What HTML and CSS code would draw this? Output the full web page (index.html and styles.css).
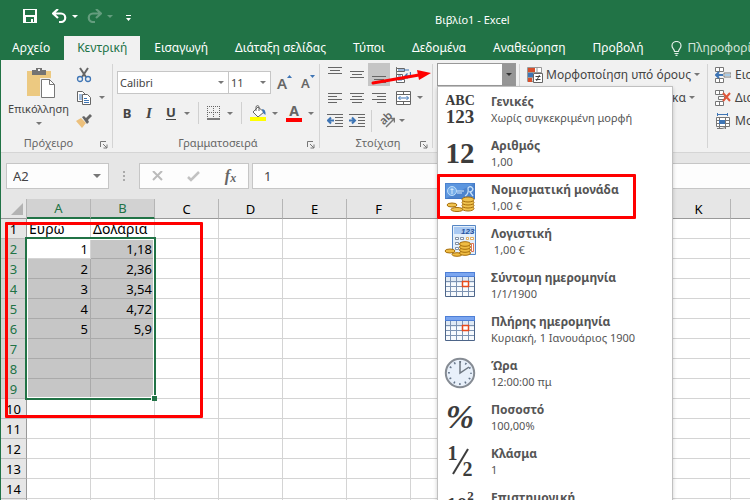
FILE: index.html
```html
<!DOCTYPE html>
<html lang="el">
<head>
<meta charset="utf-8">
<title>Βιβλίο1 - Excel</title>
<link rel="stylesheet" href="styles.css">
</head>
<body>
<div class="app">
  <header class="titlebar">
    <div class="quick">
      <button class="plain" aria-label="Αποθήκευση"><svg width="14" height="14" viewBox="0 0 14 14"><path d="M0 0h14v14H0z" fill="#fff"/><path d="M2 1h10v5H2zM3 8h8v5h-1v-3H8v3H3z" fill="#217346"/><path d="M4 10h2v3H4z" fill="#217346"/></svg></button>
      <button class="plain undo" aria-label="Αναίρεση"><svg width="15" height="14" viewBox="0 0 15 14"><path d="M6 0 1 4.500 6 9M1.500 4.500H9a4 4 0 0 1 0 8.500H7" fill="none" stroke="#fff" stroke-width="2.200"/></svg><i class="caret"></i></button>
      <button class="plain redo" aria-label="Επανάληψη"><svg width="15" height="14" viewBox="0 0 15 14"><path d="m9 0 5 4.500L9 9M13.500 4.500H6A4 4 0 0 0 6 13h2" fill="none" stroke="#fff" stroke-width="2.200"/></svg><i class="caret"></i></button>
      <button class="plain more" aria-label="Προσαρμογή"><svg width="5" height="7" viewBox="0 0 5 7"><path d="M0 0h5v1H0zM0 3h5L2.500 6z" fill="#fff"/></svg></button>
    </div>
    <span class="title">Βιβλίο1 - Excel</span>
  </header>

  <nav class="tabs">
    <a href="#" class="file">Αρχείο</a>
    <a href="#" class="active">Κεντρική</a>
    <a href="#">Εισαγωγή</a>
    <a href="#">Διάταξη σελίδας</a>
    <a href="#">Τύποι</a>
    <a href="#">Δεδομένα</a>
    <a href="#">Αναθεώρηση</a>
    <a href="#">Προβολή</a>
    <a href="#" class="tell"><svg width="11" height="15" viewBox="0 0 11 15"><path d="M3.500 10.500C3.500 8 1 7.500 1 4.800a4.500 4.300 0 0 1 9 0C10 7.500 7.500 8 7.500 10.500zM3.500 12.500h4M4.500 14.300h2" fill="none" stroke="#e4efe8" stroke-width="1.200"/></svg>Πληροφορίες</a>
  </nav>

  <section class="ribbon">
    <div class="group clipboard">
      <div class="body">
        <button class="plain paste">
          <svg width="28" height="30" viewBox="0 0 28 30"><path d="M0 3h24v25H0z" fill="#ecc981"/><path d="M5 2h4V0h6v2h4v5H5z" fill="#737373"/><path d="M11 1h2v2h-2z" fill="#f1f1f1"/><path d="M14 11h9l5 5v13H14z" fill="#fff" stroke="#f1f1f1" stroke-width="2"/><path d="M14.500 11.500h8l5 5v13h-13zM22.500 11.500v5h5" fill="#fff" stroke="#777"/></svg>
          <span>Επικόλληση</span>
          <i class="caret"></i>
        </button>
        <div class="stack">
          <button class="plain" aria-label="Αποκοπή"><svg width="16" height="16" viewBox="0 0 16 16"><path d="m4 1 6 9M12 1l-6 9" stroke="#666" stroke-width="2"/><circle cx="4" cy="12" r="2.500" fill="none" stroke="#3e75b5" stroke-width="1.300"/><circle cx="12" cy="12" r="2.500" fill="none" stroke="#3e75b5" stroke-width="1.300"/></svg></button>
          <button class="plain" aria-label="Αντιγραφή"><svg width="16" height="16" viewBox="0 0 16 16"><path d="M1.500 1.500h5l3 3v7h-8z" fill="#fff" stroke="#666"/><path d="M3 5h3M3 7h3M3 9h3" stroke="#3e75b5"/><path d="M6.500 4.500h5l3 3v7h-8z" fill="#fff" stroke="#666"/><path d="M8 8.500h3M8 10.500h5M8 12.500h5" stroke="#3e75b5"/></svg><i class="caret"></i></button>
          <button class="plain" aria-label="Πινέλο μορφοποίησης"><svg width="16" height="16" viewBox="0 0 16 16"><path d="M0 8 5 5l5 5-4 5z" fill="#ecc07c"/><path d="m6 4 2-1 2 2 4-4 2 2-4 4 1 2-2 2z" fill="#666"/></svg></button>
        </div>
      </div>
      <div class="caption">Πρόχειρο<svg class="launch" width="8" height="8" viewBox="0 0 8 8"><path d="M.5 6V.5H6M3 3l4 4M7 3.500V7H3.500" fill="none" stroke="#777"/></svg></div>
    </div>
    <span class="divider"></span>

    <div class="group font">
      <div class="body">
        <div class="row">
          <div class="combo name"><select aria-label="Γραμματοσειρά"><option>Calibri</option></select><i class="caret"></i></div>
          <div class="combo size"><select aria-label="Μέγεθος"><option>11</option></select><i class="caret"></i></div>
          <button class="plain grow" aria-label="Αύξηση">A<svg width="5" height="3" viewBox="0 0 5 3"><path d="M0 3 2.500 0 5 3z" fill="#3e75b5"/></svg></button>
          <button class="plain shrink" aria-label="Μείωση">A<svg width="5" height="3" viewBox="0 0 5 3"><path d="M0 0h5L2.500 3z" fill="#3e75b5"/></svg></button>
        </div>
        <div class="row tools">
          <button class="plain letter"><b>B</b></button>
          <button class="plain letter"><b class="ital">I</b></button>
          <button class="plain letter under"><b>U</b></button><i class="caret"></i>
          <span class="bar"></span>
          <button class="plain" aria-label="Περιγράμματα"><svg width="14" height="14" viewBox="0 0 14 14"><path d="M0 .5h13M0 6.500h13M.5 0v12M6.500 0v12M12.500 0v12" stroke="#666" stroke-dasharray="1 1"/><path d="M0 13h13" stroke="#555" stroke-width="1.500"/></svg></button><i class="caret"></i>
          <span class="bar"></span>
          <button class="plain" aria-label="Χρώμα γεμίσματος"><svg width="16" height="16" viewBox="0 0 16 16"><path d="m3 7 5-5 6 5-6 5z" fill="#fff" stroke="#666"/><path d="M6 6V1.500q2-2 3 0V6" fill="none" stroke="#666"/><path d="M12 4q4 0 3.500 6L13 8z" fill="#3e75b5"/><path d="M0 12h16v4H0z" fill="#ff0"/></svg></button><i class="caret"></i>
          <button class="plain color" aria-label="Χρώμα γραμματοσειράς">A</button><i class="caret"></i>
        </div>
      </div>
      <div class="caption">Γραμματοσειρά<svg class="launch" width="8" height="8" viewBox="0 0 8 8"><path d="M.5 6V.5H6M3 3l4 4M7 3.500V7H3.500" fill="none" stroke="#777"/></svg></div>
    </div>
    <span class="divider"></span>

    <div class="group align">
      <div class="body">
        <div class="row">
          <button class="plain" aria-label="Επάνω"><svg width="16" height="16" viewBox="0 0 16 16"><path d="M1 .5h14M3 3.500h10M1 6.500h14" stroke="#666"/></svg></button>
          <button class="plain" aria-label="Μέση"><svg width="16" height="16" viewBox="0 0 16 16"><path d="M1 4.500h14M3 7.500h10M1 10.500h14" stroke="#666"/></svg></button>
          <button class="plain on" aria-label="Κάτω"><svg width="16" height="16" viewBox="0 0 16 16"><path d="M1 9.500h14M3 12.500h10M1 15.500h14" stroke="#666"/></svg></button>
          <button class="plain wide" aria-label="Αναδίπλωση"><svg width="16" height="16" viewBox="0 0 16 16"><path d="M1.500 0v16" stroke="#777"/><path d="M1.500 1.500h8v3h-8zM1.500 7.500h6v3h-6zM1.500 12.500h8v3h-8z" fill="#fff" stroke="#666"/><path d="M3 3h11M3 9h3M3 13h4" stroke="#3e75b5"/><path d="M15.500 5v4h-5M12.500 6.500 10 9l2.500 2.500" fill="none" stroke="#3e75b5" stroke-width="1.300"/></svg></button>
        </div>
        <div class="row">
          <button class="plain" aria-label="Αριστερά"><svg width="16" height="16" viewBox="0 0 16 16"><path d="M1 3.500h14M1 6.500h9M1 9.500h14M1 12.500h9" stroke="#666"/></svg></button>
          <button class="plain" aria-label="Κέντρο"><svg width="16" height="16" viewBox="0 0 16 16"><path d="M1 3.500h14M3 6.500h10M1 9.500h14M3 12.500h10" stroke="#666"/></svg></button>
          <button class="plain" aria-label="Δεξιά"><svg width="16" height="16" viewBox="0 0 16 16"><path d="M1 3.500h14M6 6.500h9M1 9.500h14M6 12.500h9" stroke="#666"/></svg></button>
          <button class="plain wide" aria-label="Συγχώνευση"><svg width="16" height="16" viewBox="0 0 16 16"><path d="M1.500 1.500h14v13h-14zM1.500 4.500h14M1.500 11.500h14M8.500 1v3.500M8.500 11.500V15" fill="#fff" stroke="#666"/><path d="M3.500 8h10M5.500 6l-2 2 2 2M11.500 6l2 2-2 2" fill="none" stroke="#3e75b5"/></svg><i class="caret"></i></button>
        </div>
        <div class="row">
          <button class="plain" aria-label="Μείωση εσοχής"><svg width="16" height="16" viewBox="0 0 16 16"><path d="M0 1.500h16M8 4.500h8M8 7.500h8M8 10.500h8M0 13.500h16" stroke="#666"/><path d="M7 7.500H1M4 4.500l-3 3 3 3" fill="none" stroke="#3e75b5" stroke-width="2"/></svg></button>
          <button class="plain" aria-label="Αύξηση εσοχής"><svg width="16" height="16" viewBox="0 0 16 16"><path d="M0 1.500h16M9 4.500h7M9 7.500h7M9 10.500h7M0 13.500h16" stroke="#666"/><path d="M0 7.500h6M3 4.500l3 3-3 3" fill="none" stroke="#3e75b5" stroke-width="2"/></svg></button>
          <span class="bar"></span>
          <button class="plain orient" aria-label="Προσανατολισμός"><span class="ab">ab</span><svg width="16" height="16" viewBox="0 0 16 16"><path d="m7 14 8-8M11.500 5.500h4v4" fill="none" stroke="#777" stroke-width="1.500"/></svg></button><i class="caret"></i>
        </div>
      </div>
      <div class="caption">Στοίχιση<svg class="launch" width="8" height="8" viewBox="0 0 8 8"><path d="M.5 6V.5H6M3 3l4 4M7 3.500V7H3.500" fill="none" stroke="#777"/></svg></div>
    </div>
    <span class="divider"></span>

    <div class="group number">
      <div class="format"><select aria-label="Μορφή αριθμού"><option></option></select><span class="drop"><i class="caret"></i></span></div>
      <svg class="arrow" width="64" height="20" viewBox="0 0 64 20"><path d="M4 14 50 6" stroke="#f00" stroke-width="3" stroke-linecap="round"/><path d="M48 1 62 4 50 11z" fill="#f00"/></svg>
      <ul class="menu">
        <li><span class="pic general"><span>ABC</span><span class="digits">123</span></span><div><b>Γενικές</b><span>Χωρίς συγκεκριμένη μορφή</span></div></li>
        <li><span class="pic big">12</span><div><b>Αριθμός</b><span>1,00</span></div></li>
        <li class="marked"><span class="pic"><svg width="32" height="32" viewBox="0 0 32 32"><path d="M1 2h30v16H1z" fill="#4b83cf"/><path d="M2 3h28v14H2z" fill="#5c96df"/><path d="M1 18h30V2z" fill="#3768b4" opacity=".4"/><circle cx="8" cy="10" r="4.500" fill="#78afea" stroke="#bddcf8"/><path d="M8 7v6M6.500 8.500h3M13 10h7M13 12h5" stroke="#d4e8fb"/><path d="M21 15q4-2 3-8 3-3 5 1-1 3-3 3l3 4" fill="none" stroke="#c7e0f8" stroke-width="1.300"/><g fill="#f0c24e" stroke="#a66e0c"><ellipse cx="8" cy="24" rx="5" ry="2"/><ellipse cx="13" cy="28.500" rx="6" ry="2"/><ellipse cx="24" cy="27.500" rx="6" ry="2.500"/><ellipse cx="24" cy="24.500" rx="6" ry="2.500"/><ellipse cx="24" cy="21.500" rx="6" ry="2.500"/><ellipse cx="24" cy="18.500" rx="6" ry="2.500"/></g></svg></span><div><b>Νομισματική μονάδα</b><span>1,00 €</span></div></li>
        <li><span class="pic"><svg width="32" height="32" viewBox="0 0 32 32"><path d="M8.500.5h23v29h-23z" fill="#e4effa" stroke="#5686c4"/><path d="M10 2h20v7H10z" fill="#a9c9f2"/><text x="17" y="9" class="calc">123</text><g fill="#fff" stroke="#64758d" stroke-width=".8"><path d="M11.500 12.500h3v2h-3zM16.500 12.500h3v2h-3zM11.500 17.500h3v2h-3zM16.500 17.500h3v2h-3zM11.500 22.500h3v2h-3z"/><path d="M22.500 12.500h2v2h-2zM26.500 12.500h3v2h-3z" stroke="#df9c34"/><path d="M27.500 18.500h2v8h-2z" stroke="#dc522a"/></g><g fill="#efbc43" stroke="#a66e0c"><ellipse cx="6" cy="26" rx="5" ry="2"/><ellipse cx="13" cy="29.500" rx="5" ry="1.800"/><ellipse cx="21" cy="28" rx="5.500" ry="2.300"/><ellipse cx="21" cy="25" rx="5.500" ry="2.300"/><ellipse cx="21" cy="22" rx="5.500" ry="2.300"/><ellipse cx="21" cy="19" rx="5.500" ry="2.300"/></g></svg></span><div><b>Λογιστική</b><span>&nbsp;1,00 €</span></div></li>
        <li><span class="pic"><svg width="32" height="32" viewBox="0 0 32 32"><path d="M1.500 3.500h29v24h-29z" fill="#f7fafd" stroke="#4d6589"/><path d="M2 8h28v6H2z" fill="#dfe9f4"/><path d="M1 3h30v5H1z" fill="#4e7fd6"/><path d="M2 4h28v3H2z" fill="#7ba6f0"/><path d="M6.500 8v19M12.500 8v19M18.500 8v19M24.500 8v19M2 12.500h28M2 17.500h28M2 22.500h28" stroke="#7d93b2"/><path d="M18.500 12.500h6v5h-6z" fill="#fff" stroke="#e84a1c" stroke-width="1.500"/></svg></span><div><b>Σύντομη ημερομηνία</b><span>1/1/1900</span></div></li>
        <li><span class="pic"><svg width="32" height="32" viewBox="0 0 32 32"><path d="M1.500 3.500h29v24h-29z" fill="#f7fafd" stroke="#4d6589"/><path d="M2 8h28v6H2z" fill="#dfe9f4"/><path d="M1 3h30v5H1z" fill="#4e7fd6"/><path d="M2 4h28v3H2z" fill="#7ba6f0"/><path d="M6.500 8v19M12.500 8v19M18.500 8v19M24.500 8v19M2 12.500h28M2 17.500h28M2 22.500h28" stroke="#7d93b2"/><path d="M18.500 12.500h6v5h-6z" fill="#fff" stroke="#e84a1c" stroke-width="1.500"/></svg></span><div><b>Πλήρης ημερομηνία</b><span>Κυριακή, 1 Ιανουάριος 1900</span></div></li>
        <li><span class="pic"><svg width="32" height="32" viewBox="0 0 32 32"><circle cx="16" cy="16" r="14.200" fill="#e8f0fa" stroke="#868c94" stroke-width="2"/><circle cx="16" cy="16" r="11" fill="none" stroke="#65758a" stroke-width="2" stroke-dasharray="1.500 4.260" stroke-dashoffset=".75"/><path d="M16 4v12l9-6" fill="none" stroke="#6e7781" stroke-width="1.500"/></svg></span><div><b>Ώρα</b><span>12:00:00 πμ</span></div></li>
        <li><span class="pic slant">%</span><div><b>Ποσοστό</b><span>100,00%</span></div></li>
        <li><span class="pic frac"><span>1</span><svg width="32" height="32" viewBox="0 0 32 32"><path d="M9 29 24 4" stroke="#3c3c3c" stroke-width="2"/></svg><span class="lower">2</span></span><div><b>Κλάσμα</b><span>1</span></div></li>
        <li><span class="pic science">10<sup>2</sup></span><div><b>Επιστημονική</b><span>1,00E+00</span></div></li>
      </ul>
    </div>
    <span class="divider"></span>

    <div class="group styles">
      <button class="plain"><svg width="16" height="16" viewBox="0 0 16 16"><path d="M.5.500h14v14H.5zM.5 5.500h14M.5 10.500h14M5 .5v14M10 .5v14" fill="#fff" stroke="#999"/><path d="M1 1h7v4H1zM1 11h4v4H1z" fill="#d8502d"/><path d="M1 6h5v4H1z" fill="#3e75b5"/><path d="M6.500 6.500h9v9h-9z" fill="#fff" stroke="#666"/><path d="M8.500 9.500h5M8.500 12.500h5M12.500 8l-3 6" stroke="#444"/></svg>Μορφοποίηση υπό όρους<i class="caret"></i></button>
      <button class="plain">Μορφοποίηση ως πίνακα<i class="caret"></i></button>
    </div>
    <span class="divider"></span>

    <div class="group cells">
      <button class="plain"><svg width="16" height="16" viewBox="0 0 16 16"><path d="M.5.500h8v4h-8zM4.500.500v4M.5 11.500h8v4h-8zM4.500 11.500v4M9 6h7v4H9z" fill="#fff" stroke="#777"/><path d="M10 7h5v2h-5z" fill="#a9cbe6"/><path d="M8 8H1M4 5 1 8l3 3" fill="none" stroke="#3e75b5" stroke-width="2"/></svg>Εισαγωγή</button>
      <button class="plain"><svg width="16" height="16" viewBox="0 0 16 16"><path d="M.5.500h8v4h-8zM4.500.500v4M.5 11.500h8v4h-8zM4.500 11.500v4M3.500 6.500h6v3h-6z" fill="#fff" stroke="#777"/><path d="m8 3 7 8M15 3l-7 8" stroke="#e0563a" stroke-width="2"/></svg>Διαγραφή</button>
      <button class="plain"><svg width="16" height="16" viewBox="0 0 16 16"><path d="M2 1.500h11M2.500 0v3M12.500 0v3" stroke="#3e75b5"/><path d="M1.500 4.500h13v9h-13zM1.500 7.500h13M1.500 10.500h13M4.500 4v12M10.500 4v12M2 15.500h5l4-1" fill="#fff" stroke="#777"/><path d="M4 7h6v4H4z" fill="#3e75b5"/></svg>Μορφοποίηση</button>
    </div>
  </section>

  <section class="formula">
    <div class="box ref"><input aria-label="Πλαίσιο ονόματος" value="A2"><i class="caret"></i></div>
    <svg class="dots" width="2" height="11" viewBox="0 0 2 11"><path d="M0 0h2v2H0zM0 4h2v2H0zM0 8h2v2H0z" fill="#aaa"/></svg>
    <div class="box actions">
      <button class="plain" aria-label="Άκυρο"><svg width="12" height="10" viewBox="0 0 12 10"><path d="m1 0 9 9M10 0 1 9" stroke="#bbb" stroke-width="2"/></svg></button>
      <button class="plain" aria-label="Εισαγωγή τιμής"><svg width="14" height="11" viewBox="0 0 14 11"><path d="m1 6 3 3L12 1" fill="none" stroke="#c2c2c2" stroke-width="2.500"/></svg></button>
      <button class="plain fx">f<small>x</small></button>
    </div>
    <div class="box value"><input aria-label="Γραμμή τύπων" value="1"></div>
  </section>

  <main class="sheet">
    <table>
      <thead><tr id="heads"><th class="corner"><svg width="12" height="12" viewBox="0 0 12 12"><path d="M12 0v12H0z" fill="#b3b3b3"/></svg></th></tr></thead>
      <tbody id="rows"></tbody>
    </table>
    <div class="selection"></div>
    <div class="frame"></div>
  </main>
</div>
<script src="script.js"></script>
</body>
</html>
```
FILE: styles.css
```css
*, *::after { box-sizing: border-box; }
body {
  margin: 0;
  font: 12px/16px "Noto Sans", "Open Sans", sans-serif;
  color: #444;
}
.app {
  height: 100vh;
  display: flex;
  flex-direction: column;
  overflow: hidden;
  border-left: 1px solid #217346;
  background: #e6e6e6;
}
.plain {
  display: flex;
  align-items: center;
  padding: 0;
  border: 0;
  background: none;
  font: inherit;
  color: inherit;
}
svg { display: block; flex: none; }
.caret {
  flex: none;
  border: 3px solid transparent;
  border-top-color: #777;
  border-bottom: 0;
}

.titlebar {
  position: relative;
  height: 36px;
  flex: none;
  background: #217346;
  color: #fff;
}
.quick { display: flex; align-items: center; height: 32px; padding-left: 22px; }
.quick .caret { border-top-color: #fff; margin-left: 5px; }
.undo { margin-left: 15px; }
.redo { margin-left: 9px; opacity: .3; }
.more { margin-left: 13px; padding-top: 4px; }
.title { position: absolute; left: 434px; top: 12px; font-size: 11px; }

.tabs {
  display: flex;
  flex: none;
  height: 24px;
  background: #217346;
  line-height: 24px;
}
.tabs a {
  flex: none;
  padding: 0 13px;
  color: #fff;
  text-decoration: none;
  white-space: nowrap;
}
.tabs .active ~ a { margin-left: 1px; }
.tabs .file { padding: 0 14px 0 11px; }
.tabs .active { background: #f1f1f1; color: #217346; }
.tabs .tell { display: flex; align-items: center; gap: 6px; color: #d3e3da; }

.ribbon {
  display: flex;
  flex: none;
  height: 93px;
  padding-top: 3px;
  background: #f1f1f1;
  border-bottom: 1px solid #d5d5d5;
}
.divider { flex: none; width: 1px; margin: 1px 0 4px; background: #d4d4d4; }
.group { flex: none; display: flex; flex-direction: column; position: relative; }
.group .body { flex: 1; }
.caption {
  position: relative;
  height: 20px;
  padding-top: 3px;
  text-align: center;
  font-size: 11px;
  color: #666;
}
.launch { position: absolute; right: 4px; top: 9px; }
.row { display: flex; align-items: center; }
.bar { width: 1px; height: 22px; background: #d0d0d0; }

.clipboard { width: 111px; }
.clipboard .caption { padding-right: 16px; }
.clipboard .body { display: flex; }
.paste { flex-direction: column; width: 75px; padding-top: 5px; font-size: 11px; }
.paste svg { margin-left: 5px; }
.paste span { margin: 3px 0 5px; }
.stack { display: flex; flex-direction: column; }
.stack .plain { height: 23px; gap: 7px; }

.font { width: 206px; padding-left: 4px; }
.font .body { padding-top: 8px; }
.combo {
  display: flex;
  align-items: center;
  height: 23px;
  padding-right: 4px;
  background: #fff;
  border: 1px solid #c6c6c6;
  font-size: 11px;
}
.combo select, .format select, .box input {
  flex: 1;
  min-width: 0;
  padding: 0 2px;
  border: 0;
  outline: 0;
  appearance: none;
  background: none;
  font: inherit;
  color: inherit;
}
.name { width: 112px; }
.size { width: 43px; margin-left: -1px; }
.grow, .shrink { align-items: flex-start; font-size: 15px; font-weight: 600; color: #666; }
.grow { margin-left: 6px; }
.shrink { margin-left: 9px; font-size: 13px; }
.tools { height: 22px; margin-top: 8px; padding-left: 3px; gap: 8px; }
.letter { width: 14px; justify-content: center; font-size: 13px; }
.tools .caret { margin: 0 0 0 -2px; }
.ital { font-family: "Liberation Serif", serif; font-style: italic; font-size: 15px; }
.under b { border-bottom: 1px solid #444; line-height: 13px; }
.color {
  width: 16px;
  height: 17px;
  justify-content: center;
  border-bottom: 4px solid #f00;
  font-size: 14px;
  font-weight: 700;
  line-height: 12px;
  color: #666;
}

.align { width: 112px; padding-left: 4px; }
.align .row { height: 23px; }
.align .row .plain { width: 22px; height: 23px; justify-content: center; }
.align .row .wide { width: auto; margin-left: 5px; gap: 6px; }
.align .bar { margin: 0 7px 0 3px; }
.align .row .on { background: #c5c5c5; }
.align .row .orient { position: relative; width: 16px; margin-right: 4px; }
.ab { position: absolute; left: 0; top: 1px; font-weight: 600; font-size: 11px; color: #666; rotate: -45deg; }

.number { width: 86px; padding-left: 4px; }
.format {
  display: flex;
  width: 79px;
  height: 23px;
  background: #fff;
  border: 1px solid #999;
}
.drop { display: flex; align-items: center; justify-content: center; width: 13px; background: #969696; }
.drop .caret { border-top-color: #333; }
.arrow { position: absolute; left: -64px; top: 6px; z-index: 4; }
.menu {
  position: absolute;
  left: 4px;
  top: 23px;
  z-index: 3;
  width: 236px;
  margin: 0;
  padding: 0;
  list-style: none;
  background: #fff;
  border: 1px solid #c0c0c0;
  box-shadow: 0 2px 4px #0003;
  color: #555;
}
.menu li { position: relative; display: flex; align-items: center; height: 44px; padding-left: 6px; }
.menu div { display: flex; flex-direction: column; margin-left: 15px; padding-top: 2px; white-space: nowrap; }
.menu div span { font-size: 11px; }
.marked::after, .frame { content: ""; position: absolute; border: 3px solid #f00; border-radius: 1px; }
.marked::after { left: -1px; top: -1px; width: 199px; height: 45px; }
.pic {
  display: flex;
  align-items: center;
  justify-content: center;
  width: 32px;
  height: 32px;
  font-family: "Liberation Serif", serif;
  font-weight: 700;
  color: #3c3c3c;
}
.general { flex-direction: column; font-size: 14px; }
.digits { font-size: 19px; }
.big { font-size: 29px; }
.slant { font-size: 34px; font-style: italic; }
.frac { position: relative; font-size: 20px; }
.frac svg { position: absolute; left: 0; top: 0; }
.frac span { align-self: flex-start; margin-right: 5px; }
.frac .lower { align-self: flex-end; margin: 0; }
.science { font-size: 21px; }
.science sup { font-size: 13px; line-height: 13px; align-self: flex-start; }
.calc { font: italic 700 8px "Liberation Sans", sans-serif; fill: #2855a0; }

.styles { width: 187px; padding-left: 7px; }
.styles .plain { height: 23px; gap: 3px; white-space: nowrap; }
.styles .plain + .plain { align-self: flex-end; margin-right: 12px; }
.cells { padding-left: 7px; }
.cells .plain { height: 23px; gap: 4px; }

.formula { display: flex; flex: none; padding: 10px 0 10px 5px; font-size: 13px; }
.box { display: flex; align-items: center; height: 26px; background: #fdfdfd; border: 1px solid #c6c6c6; }
.ref { width: 103px; padding: 0 7px 0 4px; }
.ref .caret { border-width: 4px 4px 0; }
.dots { margin: 8px 14px 0; }
.actions { width: 110px; justify-content: space-around; }
.fx { font: italic 700 16px "Liberation Serif", serif; color: #666; }
.fx small { font-size: 12px; margin-top: 5px; }
.value { flex: 1; margin-left: 3px; padding-left: 9px; border-right: 0; }

.sheet { position: relative; flex: 1; min-height: 0; overflow: hidden; background: #fff; color: #000; }
table { width: 794px; table-layout: fixed; border-collapse: separate; border-spacing: 0; font-size: 13px; line-height: 18px; }
th, td { height: 20px; padding: 0; border: solid #d4d4d4; border-width: 0 1px 1px 0; text-align: right; }
th { background: #e6e6e6; font-weight: 400; text-align: center; }
thead th { border-color: #b5b5b5; border-bottom-color: #999; }
tbody th { border-right-color: #999; border-bottom-color: #bbb; }
.corner { width: 26px; }
.corner svg { margin: 1px 0 0 10px; }
thead .picked { background: #d2d2d2; color: #217346; border-bottom: 2px solid #217346; line-height: 17px; }
tbody .picked { background: #d2d2d2; color: #217346; }
td { padding-right: 2px; }
.text { text-align: left; padding: 0 0 0 2px; font-size: 14px; }
.filled { background: #c6c6c6; border-color: #aaa; }
.selection {
  position: absolute;
  left: 24px;
  top: 38px;
  width: 131px;
  height: 163px;
  border: 2px solid #217346;
  box-shadow: inset 0 0 0 1px #fff;
}
.selection::after {
  content: "";
  position: absolute;
  right: -3px;
  bottom: -3px;
  width: 6px;
  height: 6px;
  background: #217346;
  border: solid #fff;
  border-width: 1px 0 0 1px;
}
.frame { left: 4px; top: 23px; width: 198px; height: 196px; }
```
FILE: script.js
```js
const columns = ["A", "B", "C", "D", "E", "F", "G", "H", "I", "J", "K", "L"];
const data = {
  1: ["Ευρώ", "Δολάρια"],
  2: ["1", "1,18"],
  3: ["2", "2,36"],
  4: ["3", "3,54"],
  5: ["4", "4,72"],
  6: ["5", "5,9"]
};

const heads = document.getElementById("heads");
columns.forEach((name, c) => {
  const th = document.createElement("th");
  th.textContent = name;
  if (c < 2) th.className = "picked";
  heads.append(th);
});

const rows = document.getElementById("rows");
for (let r = 1; r <= 40; r++) {
  const tr = document.createElement("tr");
  const th = document.createElement("th");
  const selected = r > 1 && r < 10;
  th.textContent = r;
  if (selected) th.className = "picked";
  tr.append(th);
  columns.forEach((name, c) => {
    const td = document.createElement("td");
    td.textContent = (data[r] && data[r][c]) || "";
    if (r === 1) td.className = "text";
    // The active cell A2 stays white inside the selected range.
    if (selected && c < 2 && !(r === 2 && c === 0)) td.className = "filled";
    tr.append(td);
  });
  rows.append(tr);
}
```
